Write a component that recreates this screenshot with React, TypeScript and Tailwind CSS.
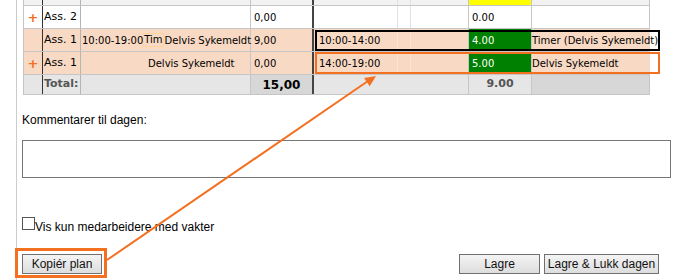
const ORANGE = "#f37021";

function Plus() {
  return <span className="text-[13px] font-bold leading-none text-[#f37021]">+</span>;
}

export default function App() {
  return (
    <div className="relative w-[673px] h-[280px] overflow-hidden bg-white">
      <div className="ml-[16px] h-full border-l border-[#cccccc] pl-[5px]">
        {/* Plan table */}
        <div className="ml-[1px] w-[627px] border-l border-[#c4c4c4] font-['DejaVu_Sans',sans-serif] text-[10px] text-black">
          {/* tail of the row above */}
          <div className="flex h-[6px] border-b border-[#c6c6c6] bg-[#f2f2f2]">
            <div className="w-[19px] shrink-0 border-r border-[#333]" />
            <div className="w-[38px] shrink-0 border-r border-[#b4b4b4]" />
            <div className="w-[170px] shrink-0 border-r border-[#c6c6c6]" />
            <div className="w-[63px] shrink-0 border-r-2 border-[#444]" />
            <div className="w-[84px] shrink-0 border-r border-[#e2e2e2]" />
            <div className="w-[13px] shrink-0 border-r border-[#e2e2e2]" />
            <div className="w-[58px] shrink-0 border-r border-[#c6c6c6]" />
            <div className="w-[63px] shrink-0 border-r border-[#c6c6c6] bg-[#ffff00]" />
            <div className="w-[118px] shrink-0 border-r border-[#c6c6c6]" />
          </div>

          {/* Ass. 2 */}
          <div className="flex h-[23px] border-b border-[#c6c6c6] bg-white">
            <div className="flex w-[19px] shrink-0 items-center justify-center border-r border-[#333]"><Plus /></div>
            <div className="flex w-[38px] shrink-0 items-center border-r border-[#b4b4b4] pl-[1px] text-[11px]">Ass. 2</div>
            <div className="w-[170px] shrink-0 border-r border-[#c6c6c6]" />
            <div className="flex w-[63px] shrink-0 items-center border-r-2 border-[#444] pl-[3px]">0,00</div>
            <div className="w-[84px] shrink-0 border-r border-[#e2e2e2]" />
            <div className="w-[13px] shrink-0 border-r border-[#e2e2e2]" />
            <div className="w-[58px] shrink-0 border-r border-[#c6c6c6]" />
            <div className="flex w-[63px] shrink-0 items-center border-r border-[#c6c6c6] pl-[3px]">0.00</div>
            <div className="w-[118px] shrink-0 border-r border-[#c6c6c6]" />
          </div>

          {/* Ass. 1, first */}
          <div className="flex h-[23px] border-b border-[#c6c6c6] bg-[#f8d9c4]">
            <div className="w-[19px] shrink-0 border-r border-[#333]" />
            <div className="flex w-[38px] shrink-0 items-center border-r border-[#b4b4b4] pl-[1px] text-[11px]">Ass. 1</div>
            <div className="flex w-[170px] shrink-0 items-center whitespace-nowrap border-r border-[#c6c6c6] pl-[1px]">
              <span>10:00-19:00</span>
              <span className="h-[14px] shrink-0 border border-[#fdd49c] leading-[12px]">Tim</span>
              <span className="ml-[1px]">Delvis Sykemeldt</span>
            </div>
            <div className="flex w-[63px] shrink-0 items-center border-r-2 border-[#444] pl-[3px]">9,00</div>
            <div className="flex w-[84px] shrink-0 items-center whitespace-nowrap border-r border-[#fbe4d4] pl-[5px]">10:00-14:00</div>
            <div className="w-[13px] shrink-0 border-r border-[#fbe4d4]" />
            <div className="w-[58px] shrink-0 border-r border-[#c6c6c6]" />
            <div className="flex w-[63px] shrink-0 items-center border-r border-[#c6c6c6] bg-[#008000] pl-[3px] text-white">4.00</div>
            <div className="flex w-[125px] shrink-0 items-center whitespace-nowrap">Timer (Delvis Sykemeldt)</div>
          </div>

          {/* Ass. 1, second */}
          <div className="flex h-[23px] border-b border-[#c6c6c6] bg-[#f8d9c4]">
            <div className="flex w-[19px] shrink-0 items-center justify-center border-r border-[#333]"><Plus /></div>
            <div className="flex w-[38px] shrink-0 items-center border-r border-[#b4b4b4] pl-[1px] text-[11px]">Ass. 1</div>
            <div className="flex w-[170px] shrink-0 items-center whitespace-nowrap border-r border-[#c6c6c6] pl-[67px]">Delvis Sykemeldt</div>
            <div className="flex w-[63px] shrink-0 items-center border-r-2 border-[#444] pl-[3px]">0,00</div>
            <div className="flex w-[84px] shrink-0 items-center whitespace-nowrap border-r border-[#fbe4d4] pl-[5px]">14:00-19:00</div>
            <div className="w-[13px] shrink-0 border-r border-[#fbe4d4]" />
            <div className="w-[58px] shrink-0 border-r border-[#c6c6c6]" />
            <div className="flex w-[63px] shrink-0 items-center border-r border-[#c6c6c6] bg-[#008000] pl-[3px] text-white">5.00</div>
            <div className="flex w-[125px] shrink-0 items-center whitespace-nowrap">Delvis Sykemeldt</div>
          </div>

          {/* Total */}
          <div className="flex h-[20px] border-b border-[#c6c6c6] bg-[#e6e6e6]">
            <div className="w-[19px] shrink-0 border-r border-[#333]" />
            <div className="flex w-[38px] shrink-0 items-center border-r border-[#b4b4b4] pl-[1px] text-[11px] font-bold text-[#555]">Total:</div>
            <div className="w-[170px] shrink-0 border-r border-[#c6c6c6]" />
            <div className="flex w-[63px] shrink-0 items-center justify-center border-r-2 border-[#444] bg-[#d7d7d7] text-[12px] font-bold">15,00</div>
            <div className="w-[84px] shrink-0" />
            <div className="w-[13px] shrink-0" />
            <div className="w-[58px] shrink-0 border-r border-[#c6c6c6]" />
            <div className="flex w-[63px] shrink-0 items-center justify-center border-r border-[#c6c6c6] text-[11px] font-bold text-[#555]">9.00</div>
            <div className="w-[118px] shrink-0 border-r border-[#c6c6c6] bg-[#d7d7d7]" />
          </div>
        </div>

        {/* Comments and actions */}
        <div className="font-['Liberation_Sans',Arial,sans-serif] text-[12px] text-black">
          <div className="mt-[18px] leading-[14px]">Kommentarer til dagen:</div>
          <div className="mt-[13px] h-[38px] w-[649px] border border-[#767676] bg-white" />

          <div className="mt-[39px] flex items-start">
            <span className="h-[13px] w-[13px] border border-[#555] bg-white" />
            <span className="mt-[3px] leading-[14px]">Vis kun medarbeidere med vakter</span>
          </div>

          <div className="mt-[20px] flex w-[649px] items-center pr-[12px]">
            <button className="h-[20px] w-[80px] border border-[#707070] bg-gradient-to-b from-[#f4f4f4] to-[#dddddd] leading-[18px] text-[#111]">Kopiér plan</button>
            <button className="ml-auto h-[20px] w-[81px] border border-[#707070] bg-gradient-to-b from-[#f4f4f4] to-[#dddddd] leading-[18px] text-[#111]">Lagre</button>
            <button className="ml-[4px] h-[20px] w-[115px] border border-[#707070] bg-gradient-to-b from-[#f4f4f4] to-[#dddddd] leading-[18px] text-[#111]">Lagre &amp; Lukk dagen</button>
          </div>
        </div>
      </div>

      {/* annotations */}
      <div className="pointer-events-none absolute left-[315px] top-[30px] h-[21px] w-[345px] border-2 border-black" />
      <div className="pointer-events-none absolute left-[315px] top-[52px] h-[22px] w-[345px] border-2 border-[#f37021]" />
      <div className="pointer-events-none absolute left-[15px] top-[248px] h-[30px] w-[92px] border-[3px] border-[#f37021]" />
      <svg className="pointer-events-none absolute left-0 top-0" width="673" height="280" viewBox="0 0 673 280">
        <line x1="107" y1="260" x2="368" y2="81" stroke={ORANGE} strokeWidth="2" />
        <polygon points="376,76 369.7,86.3 364.1,78.1" fill={ORANGE} />
      </svg>
    </div>
  );
}
